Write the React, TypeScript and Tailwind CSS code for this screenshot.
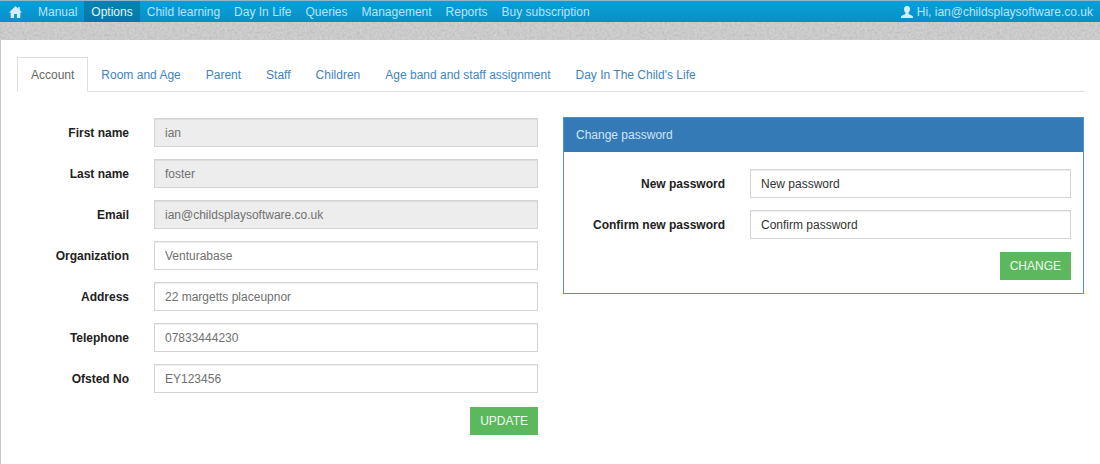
import React, { useState } from 'react';

const navItems = ['Manual', 'Options', 'Child learning', 'Day In Life', 'Queries', 'Management', 'Reports', 'Buy subscription'];

const tabs = ['Account', 'Room and Age', 'Parent', 'Staff', 'Children', 'Age band and staff assignment', "Day In The Child's Life"];

const accountFields = [
  { id: 'firstName', label: 'First name', value: 'ian', locked: true },
  { id: 'lastName', label: 'Last name', value: 'foster', locked: true },
  { id: 'email', label: 'Email', value: 'ian@childsplaysoftware.co.uk', locked: true },
  { id: 'organization', label: 'Organization', value: 'Venturabase', locked: false },
  { id: 'address', label: 'Address', value: '22 margetts placeupnor', locked: false },
  { id: 'telephone', label: 'Telephone', value: '07833444230', locked: false },
  { id: 'ofsted', label: 'Ofsted No', value: 'EY123456', locked: false },
];

const passwordFields = [
  { id: 'newPassword', label: 'New password', placeholder: 'New password' },
  { id: 'confirmPassword', label: 'Confirm new password', placeholder: 'Confirm password' },
];

const inputClass =
  'h-[29px] w-full min-w-0 border border-[#d4d4d4] bg-white px-2.5 text-[#707070] shadow-[inset_0_1px_1px_rgba(0,0,0,0.07)] outline-none focus:border-[#66afe9] disabled:bg-[#ededed]';

const buttonClass = 'h-7 cursor-pointer bg-[#5cb85c] px-2.5 text-[#f0f9f0] uppercase hover:bg-[#449d44]';

function HomeIcon() {
  return (
    <svg viewBox="0 0 13 12" className="h-3 w-[13px]" fill="#d3eefa" aria-hidden="true">
      <path d="M6.5 0 0 6.5h1.7V12h3.4V8h2.8v4h3.4V6.5H13L10.8 4.3V1H9.2v1.7Z" />
    </svg>
  );
}

function UserIcon() {
  return (
    <svg viewBox="0 0 12 12" className="h-3 w-3" fill="#d3eefa" aria-hidden="true">
      <path d="M6 0C4.100 0 3 1.200 3 3c0 1.600.6 2.900 1.500 3.700v1.100C4 8.800.3 9.200 0 11v1h12v-1c-.3-1.800-4-2.200-4.500-3.200V6.700C8.400 5.900 9 4.600 9 3c0-1.800-1.100-3-3-3Z" />
    </svg>
  );
}

// Grainy paper strip under the navbar
function Texture() {
  return (
    <svg className="block h-[18px] w-full" aria-hidden="true">
      <filter id="grain" x="0" y="0" width="100%" height="100%">
        <feTurbulence type="fractalNoise" baseFrequency="0.4" numOctaves="2" seed="4" />
        <feColorMatrix values="0.18 0 0 0 0.66  0.18 0 0 0 0.66  0.18 0 0 0 0.66  0 0 0 0 1" colorInterpolationFilters="sRGB" />
      </filter>
      <rect width="100%" height="100%" filter="url(#grain)" />
    </svg>
  );
}

function Navbar() {
  return (
    <nav className="flex h-[22px] items-stretch border-t border-[#8fb9cb] bg-linear-to-b from-[#06a0da] to-[#0890c6] text-[#b9e4f6]">
      <a href="#home" aria-label="Home" className="flex items-center px-[9px]">
        <HomeIcon />
      </a>
      {navItems.map((item) => (
        <a
          key={item}
          href="#"
          className={`flex items-center px-[7px] whitespace-nowrap hover:text-white ${item === 'Options' ? 'bg-linear-to-b from-[#0583b3] to-[#0679a6] text-[#e2f5fc]' : ''}`}
        >
          {item}
        </a>
      ))}
      <a href="#profile" className="ml-auto flex items-center gap-1 px-[7px] whitespace-nowrap hover:text-white">
        <UserIcon />
        Hi, ian@childsplaysoftware.co.uk
      </a>
    </nav>
  );
}

function AccountForm() {
  const [values, setValues] = useState<Record<string, string>>(
    Object.fromEntries(accountFields.map((f) => [f.id, f.value]))
  );

  return (
    <form onSubmit={(e) => e.preventDefault()} className="flex flex-col gap-3.5 pt-px">
      <div className="flex flex-col gap-3">
        {accountFields.map((field) => (
          <div key={field.id} className="grid grid-cols-[112px_1fr] items-center gap-[25px]">
            <label htmlFor={field.id} className="text-right font-bold">
              {field.label}
            </label>
            <input
              id={field.id}
              type="text"
              value={values[field.id]}
              disabled={field.locked}
              onChange={(e) => setValues({ ...values, [field.id]: e.target.value })}
              className={inputClass}
            />
          </div>
        ))}
      </div>
      <button type="submit" className={`${buttonClass} self-end`}>
        Update
      </button>
    </form>
  );
}

function PasswordPanel() {
  return (
    <section className="self-start border border-[#5290c4]">
      <h2 className="bg-[#337ab7] px-3 py-2 leading-[18px] text-[#d3e4f2]">Change password</h2>
      <form onSubmit={(e) => e.preventDefault()} className="flex flex-col gap-3 px-3 pt-[17px] pb-[13px]">
        {passwordFields.map((field) => (
          <div key={field.id} className="grid grid-cols-[149px_1fr] items-center gap-[25px]">
            <label htmlFor={field.id} className="text-right font-bold">
              {field.label}
            </label>
            <input id={field.id} type="password" placeholder={field.placeholder} className={`${inputClass} placeholder:text-[#333]`} />
          </div>
        ))}
        <button type="submit" className={`${buttonClass} mt-px self-end`}>
          Change
        </button>
      </form>
    </section>
  );
}

export default function App() {
  const [activeTab, setActiveTab] = useState('Account');

  return (
    <div className="flex min-h-screen flex-col bg-[#c6c6c6] font-['Liberation_Sans',Arial,sans-serif] text-[12px] leading-4 text-[#222]">
      <Navbar />
      <Texture />
      <main className="ml-px flex-1 bg-white px-4 pt-[17px] pb-7">
        <div role="tablist" className="flex gap-px border-b border-[#ddd]">
          {tabs.map((tab) => (
            <button
              key={tab}
              role="tab"
              aria-selected={activeTab === tab}
              onClick={() => setActiveTab(tab)}
              className={`-mb-px cursor-pointer border px-[11px] pt-[9px] pb-2 leading-4 whitespace-nowrap first:px-[13px] ${
                activeTab === tab ? 'border-[#ddd] border-b-white bg-white text-[#666]' : 'border-transparent text-[#4384bd]'
              }`}
            >
              {tab}
            </button>
          ))}
        </div>
        <div className="mt-[25px] grid grid-cols-2 gap-[25px]">
          <AccountForm />
          <PasswordPanel />
        </div>
      </main>
    </div>
  );
}
